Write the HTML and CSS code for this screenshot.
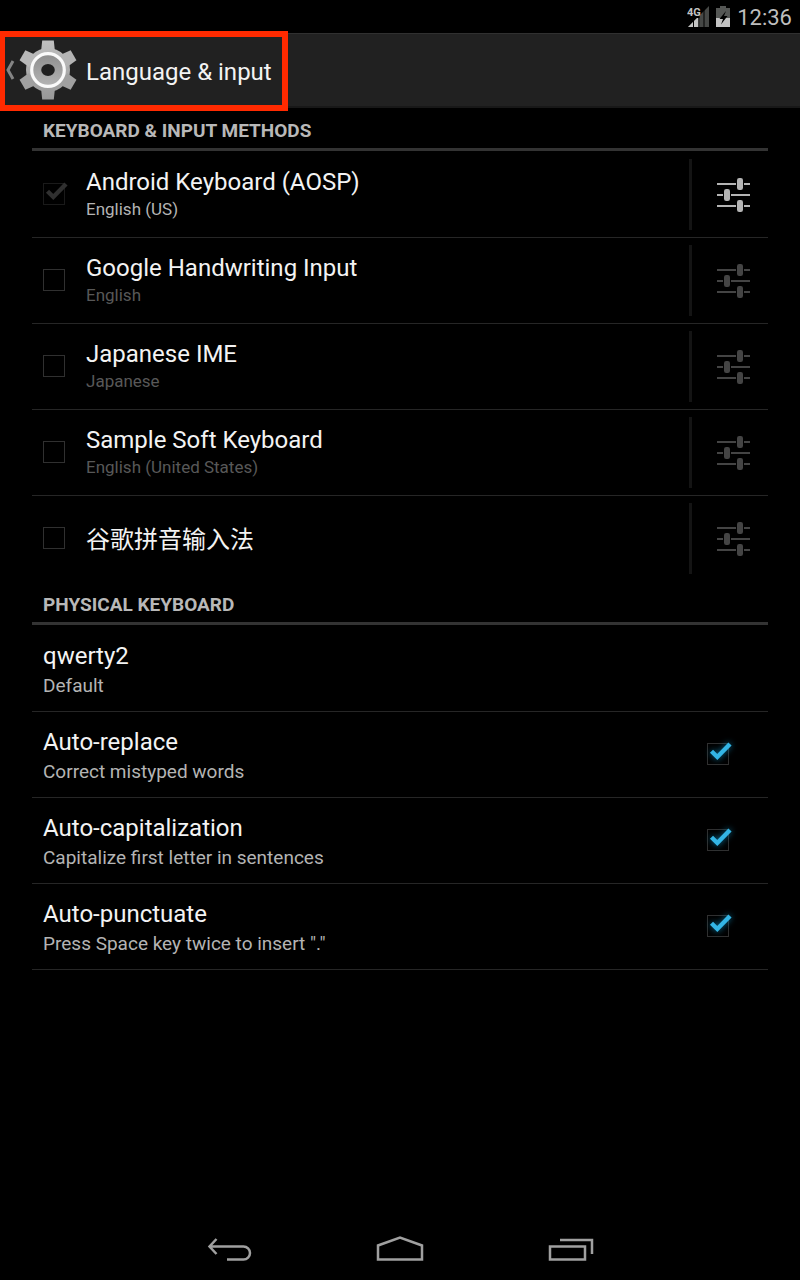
FILE: index.html
```html
<!DOCTYPE html>
<html lang="en">
<head>
<meta charset="utf-8">
<meta name="viewport" content="width=device-width">
<title>Language &amp; input</title>
<link rel="stylesheet" href="styles.css">
</head>
<body>
<svg class="defs" width="0" height="0" aria-hidden="true">
  <symbol id="tune" viewBox="0 0 34 36">
    <path d="M0 7h19M27 7h6M0 18h6M14 18h19M0 29h19M27 29h6" stroke="currentColor" stroke-width="2" fill="none"/>
    <rect x="20" y="1" width="6" height="12" rx="2.2" fill="currentColor"/>
    <rect x="7" y="12" width="6" height="12" rx="2.2" fill="currentColor"/>
    <rect x="20" y="23" width="6" height="12" rx="2.2" fill="currentColor"/>
  </symbol>
  <symbol id="tick" viewBox="0 0 22 22" overflow="visible">
    <path d="M4.500 8.300l5.800 5.700L23 1" stroke="currentColor" stroke-width="4.400" fill="none"/>
  </symbol>
</svg>
<div class="status">
  <svg width="22" height="22" viewBox="0 0 22 22" aria-label="4G signal">
    <path d="M22 0v21H1z" fill="#464846"/>
    <path d="M12 10v11H1z" fill="#c4c4c4"/>
    <path d="M6.500 12v10M11.800 8v14M17 4v18" stroke="#000" stroke-width="1"/>
    <path d="M0 0h12.500v12H0z" fill="#000"/>
    <text class="net" x="0" y="10">4G</text>
  </svg>
  <svg width="14" height="22" viewBox="0 0 14 22" aria-label="Battery charging">
    <path d="M4 0h6v2h4v10H0V2h4z" fill="#555755"/>
    <path d="M0 12h14v9H0z" fill="#c4c4c4"/>
    <path d="M10 5L3.500 13H7l-2 5.500L11.500 10H8z" fill="#000"/>
  </svg>
  <time class="clock">12:36</time>
</div>
<header class="bar">
  <a class="up" href="#">
    <svg class="chev" width="10" height="20" viewBox="0 0 10 20" aria-hidden="true"><path d="M8 1L3 10l5 9" fill="none" stroke="#858585" stroke-width="3"/></svg>
    <svg width="60" height="60" viewBox="-30 -30 60 60" aria-hidden="true">
      <defs>
        <linearGradient id="body" x1="0" y1="-30" x2="0" y2="30" gradientUnits="userSpaceOnUse"><stop offset="0" stop-color="#c0c0c0"/><stop offset="1" stop-color="#989898"/></linearGradient>
        <linearGradient id="disc" x1="0" y1="0" x2="0" y2="1"><stop offset="0" stop-color="#8e8e8e"/><stop offset="1" stop-color="#b4b4b4"/></linearGradient>
      </defs>
      <g fill="url(#body)">
        <circle r="22"/>
        <path d="M-7-18L-5.800-29.500H5.800L7-18zM-7 18L-5.800 29.500H5.800L7 18z"/>
        <path d="M-7-18L-5.800-29.500H5.800L7-18z" transform="rotate(60)" fill="#b4b4b4"/>
        <path d="M-7-18L-5.800-29.500H5.800L7-18z" transform="rotate(120)" fill="#a0a0a0"/>
        <path d="M-7-18L-5.800-29.500H5.800L7-18z" transform="rotate(240)" fill="#a0a0a0"/>
        <path d="M-7-18L-5.800-29.500H5.800L7-18z" transform="rotate(300)" fill="#b8b8b8"/>
      </g>
      <circle r="16.300" fill="url(#disc)" stroke="#fafafa" stroke-width="3.200"/>
      <ellipse rx="6.800" ry="6" fill="#202020"/>
    </svg>
    <h1 class="heading">Language &amp; input</h1>
    <span class="frame"></span>
  </a>
</header>
<main class="list">
  <section>
    <h2 class="section">KEYBOARD &amp; INPUT METHODS</h2>
    <div class="row method">
      <span class="box muted"><input type="checkbox" id="m1" checked disabled><svg class="tick"><use href="#tick"/></svg></span>
      <label class="text" for="m1"><span class="title">Android Keyboard (AOSP)</span><span class="summary lit">English (US)</span></label>
      <button class="tune on" aria-label="Android Keyboard settings"><svg width="34" height="36"><use href="#tune"/></svg></button>
    </div>
    <div class="row method">
      <span class="box"><input type="checkbox" id="m2"></span>
      <label class="text" for="m2"><span class="title">Google Handwriting Input</span><span class="summary">English</span></label>
      <button class="tune" aria-label="Google Handwriting settings"><svg width="34" height="36"><use href="#tune"/></svg></button>
    </div>
    <div class="row method">
      <span class="box"><input type="checkbox" id="m3"></span>
      <label class="text" for="m3"><span class="title">Japanese IME</span><span class="summary">Japanese</span></label>
      <button class="tune" aria-label="Japanese IME settings"><svg width="34" height="36"><use href="#tune"/></svg></button>
    </div>
    <div class="row method">
      <span class="box"><input type="checkbox" id="m4"></span>
      <label class="text" for="m4"><span class="title">Sample Soft Keyboard</span><span class="summary">English (United States)</span></label>
      <button class="tune" aria-label="Sample Soft Keyboard settings"><svg width="34" height="36"><use href="#tune"/></svg></button>
    </div>
    <div class="row method last">
      <span class="box"><input type="checkbox" id="m5"></span>
      <label class="text" for="m5"><span class="title" lang="zh-CN">谷歌拼音输入法</span></label>
      <button class="tune" aria-label="谷歌拼音输入法"><svg width="34" height="36"><use href="#tune"/></svg></button>
    </div>
  </section>
  <section>
    <h2 class="section">PHYSICAL KEYBOARD</h2>
    <div class="row option">
      <div class="text"><span class="title">qwerty2</span><span class="summary">Default</span></div>
    </div>
    <div class="row option">
      <label class="text" for="o1"><span class="title">Auto-replace</span><span class="summary">Correct mistyped words</span></label>
      <span class="box"><input type="checkbox" id="o1" checked><svg class="tick"><use href="#tick"/></svg></span>
    </div>
    <div class="row option">
      <label class="text" for="o2"><span class="title">Auto-capitalization</span><span class="summary">Capitalize first letter in sentences</span></label>
      <span class="box"><input type="checkbox" id="o2" checked><svg class="tick"><use href="#tick"/></svg></span>
    </div>
    <div class="row option">
      <label class="text" for="o3"><span class="title">Auto-punctuate</span><span class="summary">Press Space key twice to insert "."</span></label>
      <span class="box"><input type="checkbox" id="o3" checked><svg class="tick"><use href="#tick"/></svg></span>
    </div>
  </section>
</main>
<nav class="nav">
  <button aria-label="Back"><svg width="48" height="32" viewBox="0 0 48 32"><path d="M4 12.500h34.500a6.500 6.500 0 0 1 0 13H22M11.500 5L4.500 12.500l7 7.500" /></svg></button>
  <button aria-label="Home"><svg width="48" height="32" viewBox="0 0 48 32"><path d="M2 25.500V11.500L24 3.500l22 8v14z"/></svg></button>
  <button aria-label="Recent apps"><svg width="48" height="32" viewBox="0 0 48 32"><path d="M3 12.500h35v13H3zM13 6h32v14"/></svg></button>
</nav>
</body>
</html>
```
FILE: styles.css
```css
* {
  box-sizing: border-box;
}
body {
  margin: 0;
  min-height: 100vh;
  display: flex;
  flex-direction: column;
  background: #000;
  color: #f3f3f3;
  font-family: Roboto, "Noto Sans CJK SC", sans-serif;
}
h1,
h2 {
  margin: 0;
  font-weight: 400;
}
button {
  padding: 0;
  border: 0;
  background: none;
  color: inherit;
}
.defs {
  position: absolute;
}
.status {
  height: 33px;
  padding-right: 8px;
  display: flex;
  align-items: center;
  justify-content: flex-end;
  gap: 7px;
  color: #bebebe;
}
.net {
  font: 700 11px Roboto, sans-serif;
  fill: #c4c4c4;
}
.clock {
  font-size: 22px;
  line-height: 26px;
  padding-top: 2px;
}
.bar {
  height: 75px;
  background: #212121;
  border-top: 1px solid #303030;
  border-bottom: 2px solid #181818;
  display: flex;
}
.up {
  position: relative;
  display: flex;
  align-items: center;
  padding-left: 5px;
  color: inherit;
  text-decoration: none;
}
.chev {
  margin-right: 3px;
}
.heading {
  margin-left: 8px;
  font-size: 24px;
  line-height: 28px;
  padding-top: 4px;
}
.frame {
  position: absolute;
  inset: -3px -16px -5px -1px;
  border: 6px solid #ff2a00;
}
.list {
  flex: 1;
  padding: 0 32px;
}
.section {
  height: 43px;
  margin-bottom: 1px;
  padding: 11px 11px 0;
  border-bottom: 3px solid #333;
  color: #b8b8b8;
  font-size: 19px;
  font-weight: 700;
  line-height: 24px;
}
.row {
  height: 86px;
  display: flex;
  align-items: center;
  padding: 0 11px;
  border-bottom: 1px solid #262626;
}
.last {
  border-bottom-color: transparent;
}
.text {
  flex: 1;
  display: flex;
  flex-direction: column;
}
.title {
  font-size: 24px;
  line-height: 28px;
}
.summary {
  color: #585858;
  font-size: 17px;
  line-height: 22px;
}
.summary.lit {
  color: #b4b4b4;
}
.method .text {
  gap: 2px;
  padding-bottom: 2px;
}
.last .text {
  padding: 2px 0 0;
}
.option .text {
  gap: 4px;
  padding-top: 2px;
}
.option .summary {
  color: #b4b4b4;
  font-size: 19px;
  line-height: 24px;
}
.box {
  display: grid;
  padding-bottom: 1px;
  color: #33b5e5;
}
.box > * {
  grid-area: 1 / 1;
}
.box input {
  appearance: none;
  width: 22px;
  height: 22px;
  margin: 0;
  border: 1px solid #303030;
}
.tick {
  width: 22px;
  height: 22px;
  overflow: visible;
  pointer-events: none;
  filter: drop-shadow(0 0 3px #0a6f96);
}
.muted {
  color: #303030;
}
.muted input {
  border-color: #1a1a1a;
}
.muted .tick {
  filter: none;
}
.method .box {
  margin-right: 21px;
}
.option .box {
  margin-right: 28px;
}
.method {
  padding-right: 0;
}
.tune {
  width: 79px;
  height: 71px;
  border-left: 3px solid #141414;
  color: #444;
  display: flex;
  align-items: center;
  padding-left: 25px;
}
.tune.on {
  color: #b4b4b4;
}
.nav {
  height: 64px;
  padding-top: 4px;
  display: flex;
  align-items: center;
  justify-content: center;
  gap: 123px;
}
.nav button {
  display: flex;
}
.nav path {
  fill: none;
  stroke: #a0a0a0;
  stroke-width: 2.5;
}
```
